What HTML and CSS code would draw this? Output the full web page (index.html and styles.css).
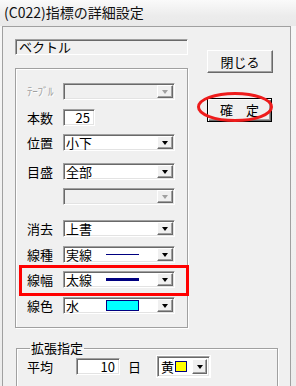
FILE: index.html
```html
<!DOCTYPE html>
<html lang="ja">
<head>
<meta charset="utf-8">
<title>(C022)指標の詳細設定</title>
<link rel="stylesheet" href="styles.css">
</head>
<body>
<div class="title">(C022)指標の詳細設定</div>
<div class="window">
  <div class="left">
    <div class="namefield">ベクトル</div>
    <div class="group main">
      <div class="row"><span class="lbl disabled">ﾃｰﾌﾞﾙ</span><div class="combo dis"><span class="arrow"><i></i></span></div></div>
      <div class="row"><span class="lbl">本数</span><div class="edit short">25</div></div>
      <div class="row"><span class="lbl">位置</span><div class="combo"><span class="ctext">小下</span><span class="arrow"><i></i></span></div></div>
      <div class="row"><span class="lbl">目盛</span><div class="combo"><span class="ctext">全部</span><span class="arrow"><i></i></span></div></div>
      <div class="row"><span class="lbl"></span><div class="combo dis"><span class="arrow"><i></i></span></div></div>
      <div class="row"><span class="lbl">消去</span><div class="combo"><span class="ctext">上書</span><span class="arrow"><i></i></span></div></div>
      <div class="row"><span class="lbl">線種</span><div class="combo"><span class="ctext">実線</span><span class="line thin"></span><span class="arrow"><i></i></span></div></div>
      <div class="row"><span class="lbl">線幅</span><div class="combo"><span class="ctext">太線</span><span class="line thick"></span><span class="arrow"><i></i></span></div></div>
      <div class="row"><span class="lbl">線色</span><div class="combo"><span class="ctext">水</span><span class="swatch cyan"></span><span class="arrow"><i></i></span></div></div>
      <div class="highlight"></div>
    </div>
  </div>
  <div class="right">
    <button class="btn close">閉じる</button>
    <div class="ok-wrap">
      <button class="btn default">確　定</button>
      <svg class="ring" width="80" height="34" viewBox="0 0 80 34"><ellipse cx="39" cy="16" rx="36.5" ry="13.5" fill="none" stroke="#ee1c1c" stroke-width="3"/></svg>
    </div>
  </div>
  <fieldset class="ext">
    <legend>拡張指定</legend>
    <div class="ext-row">
      <span class="lbl2">平均</span>
      <div class="edit num">10</div>
      <span class="unit">日</span>
      <div class="combo color"><span class="ctext">黄</span><span class="swatch yellow"></span><span class="arrow"><i></i></span></div>
    </div>
  </fieldset>
</div>
</body>
</html>
```
FILE: styles.css
```css
* { box-sizing: border-box; }
html, body { margin: 0; padding: 0; }
body {
  width: 296px;
  height: 386px;
  overflow: hidden;
  font-family: "Noto Sans CJK JP", "Noto Sans", sans-serif;
  font-size: 12px;
  color: #000;
  background: linear-gradient(180deg, #f7f7f7 0%, #ececec 100%);
}
.title {
  height: 26px;
  line-height: 25px;
  padding-left: 4px;
  font-size: 14px;
  color: #111;
  background: linear-gradient(180deg, #fafafa 0%, #ececec 60%, #e9e9e9 100%);
}
.window {
  margin-left: 2px;
  width: 289px;
  height: 360px;
  border: 1px solid #a0a0a0;
  border-bottom: none;
  background: #f0f0f0;
  padding: 12px 0 0 12px;
  display: grid;
  grid-template-columns: 173px 66px;
  grid-template-rows: auto auto;
  column-gap: 19px;
  align-content: start;
}
.namefield {
  height: 16px;
  width: 173px;
  border: 1px solid;
  border-color: #a0a0a0 #fff #fff #a0a0a0;
  box-shadow: inset 1px 1px 0 #696969;
  padding-left: 3px;
  line-height: 14px;
  font-size: 13px;
  background: #f0f0f0;
  margin-bottom: 13px;
}
.group {
  border: 1px solid #a0a0a0;
  box-shadow: inset 1px 1px 0 #fff, 1px 1px 0 #fff;
}
.main {
  position: relative;
  height: 260px;
  padding: 14px 0 0 11px;
  display: flex;
  flex-direction: column;
}
.row {
  display: flex;
  align-items: center;
  height: 17px;
  flex: none;
}
.row:nth-child(2) { margin-top: 9px; }
.row:nth-child(3) { margin-top: 8px; }
.row:nth-child(4) { margin-top: 12px; }
.row:nth-child(5) { margin-top: 8px; }
.row:nth-child(6) { margin-top: 15px; }
.row:nth-child(7) { margin-top: 9px; }
.row:nth-child(8) { margin-top: 8px; }
.row:nth-child(9) { margin-top: 9px; }
.lbl {
  width: 36px;
  flex: none;
  line-height: 17px;
  font-size: 13px;
  white-space: nowrap;
}
.lbl.disabled {
  color: #a0a0a0;
  text-shadow: 1px 1px 0 #fff;
  font-size: 11px;
  letter-spacing: -0.3px;
}
.combo {
  width: 112px;
  height: 17px;
  border: 1px solid;
  border-color: #a0a0a0 #fff #fff #a0a0a0;
  box-shadow: inset 1px 1px 0 #696969, inset -1px -1px 0 #e3e3e3;
  background: #fff;
  display: flex;
  align-items: center;
  padding: 1px;
}
.combo.dis { background: #f0f0f0; }
.ctext {
  width: 41px;
  flex: none;
  padding-left: 1px;
  line-height: 13px;
  font-size: 13px;
  white-space: nowrap;
}
.arrow {
  margin-left: auto;
  width: 16px;
  height: 13px;
  flex: none;
  background: #f0f0f0;
  border: 1px solid;
  border-color: #fff #696969 #696969 #fff;
  box-shadow: inset -1px -1px 0 #a0a0a0;
  display: flex;
  align-items: center;
  justify-content: center;
}
.arrow i {
  width: 0;
  height: 0;
  border-left: 3.5px solid transparent;
  border-right: 3.5px solid transparent;
  border-top: 4px solid #000;
  margin-top: 1px;
}
.combo.dis .arrow i { border-top-color: #a0a0a0; }
.line { width: 33px; flex: none; background: #000080; }
.line.thin { height: 1px; }
.line.thick { height: 3px; }
.swatch {
  flex: none;
  border: 1px solid #000080;
}
.swatch.cyan { width: 33px; height: 11px; background: #00ffff; }
.swatch.yellow { width: 12px; height: 11px; background: #ffff00; }
.edit {
  height: 17px;
  border: 1px solid;
  border-color: #a0a0a0 #fff #fff #a0a0a0;
  box-shadow: inset 1px 1px 0 #696969, inset -1px -1px 0 #e3e3e3;
  background: #fff;
  text-align: right;
  padding-right: 4px;
  line-height: 15px;
  font-size: 13px;
}
.edit.short { width: 32px; }
.highlight {
  position: absolute;
  left: 3px;
  top: 196px;
  width: 170px;
  height: 31px;
  border: 3px solid #ff0000;
}
.right {
  display: flex;
  flex-direction: column;
  align-items: flex-start;
}
.btn {
  font-family: inherit;
  font-size: 13px;
  color: #000;
  background: #f0f0f0;
  border: 1px solid;
  border-color: #fff #696969 #696969 #fff;
  box-shadow: inset -1px -1px 0 #a0a0a0;
  padding: 0;
  width: 66px;
  height: 23px;
  line-height: 20px;
}
.close { margin-top: 11px; }
.ok-wrap {
  position: relative;
  margin-top: 25px;
}
.default {
  width: 65px;
  height: 24px;
  border: 1px solid #000;
  box-shadow: inset 1px 1px 0 #fff, inset -1px -1px 0 #696969, inset -2px -2px 0 #a0a0a0;
}
.ring {
  position: absolute;
  left: -11px;
  top: -7px;
  pointer-events: none;
}
.ext {
  grid-column: 1 / -1;
  margin: 12px 0 0 1px;
  width: 262px;
  height: 60px;
  padding: 0 0 0 10px;
  border: 1px solid #a0a0a0;
  box-shadow: inset 1px 1px 0 #fff, 1px 1px 0 #fff;
  min-inline-size: 0;
}
.ext legend {
  margin-left: 3px;
  padding: 0 1px;
  line-height: 16px;
  font-size: 13px;
}
.ext-row {
  display: flex;
  align-items: center;
  height: 21px;
}
.lbl2 { width: 49px; flex: none; font-size: 13px; }
.edit.num { width: 44px; }
.unit { margin-left: 8px; width: 29px; flex: none; font-size: 13px; }
.combo.color {
  width: 53px;
  height: 21px;
  outline: 1px solid #fff;
  padding: 2px 2px 2px 1px;
}
.combo.color .ctext { width: auto; padding-left: 2px; margin-right: 1px; line-height: 15px; font-size: 13px; }
.combo.color .arrow { height: 15px; width: 15px; }
```
